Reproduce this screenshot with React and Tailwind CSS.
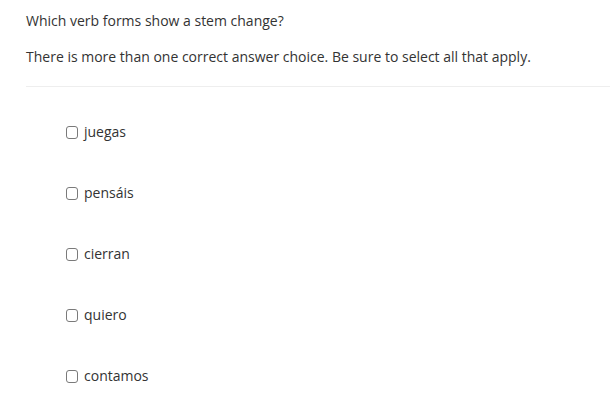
const choices = ['juegas', 'pensáis', 'cierran', 'quiero', 'contamos']

export default function App() {
  return (
    <div className="min-h-screen bg-white pl-[26px] pt-[11px] font-['Open_Sans',sans-serif] text-[14px] text-[#333]">
      <p className="leading-5">Which verb forms show a stem change?</p>
      <p className="mt-4 leading-5">There is more than one correct answer choice. Be sure to select all that apply.</p>
      <div className="mt-[19px] h-px bg-[#eeeeee]" />
      <div className="mt-[35px] flex flex-col gap-[41px] pl-10">
        {choices.map((c) => (
          <label key={c} className="flex h-5 items-center leading-5">
            <span className="mr-[6px] h-[13px] w-[12px] rounded-[3px] border border-[#7a7a7a] bg-white" />
            {c}
          </label>
        ))}
      </div>
    </div>
  )
}
